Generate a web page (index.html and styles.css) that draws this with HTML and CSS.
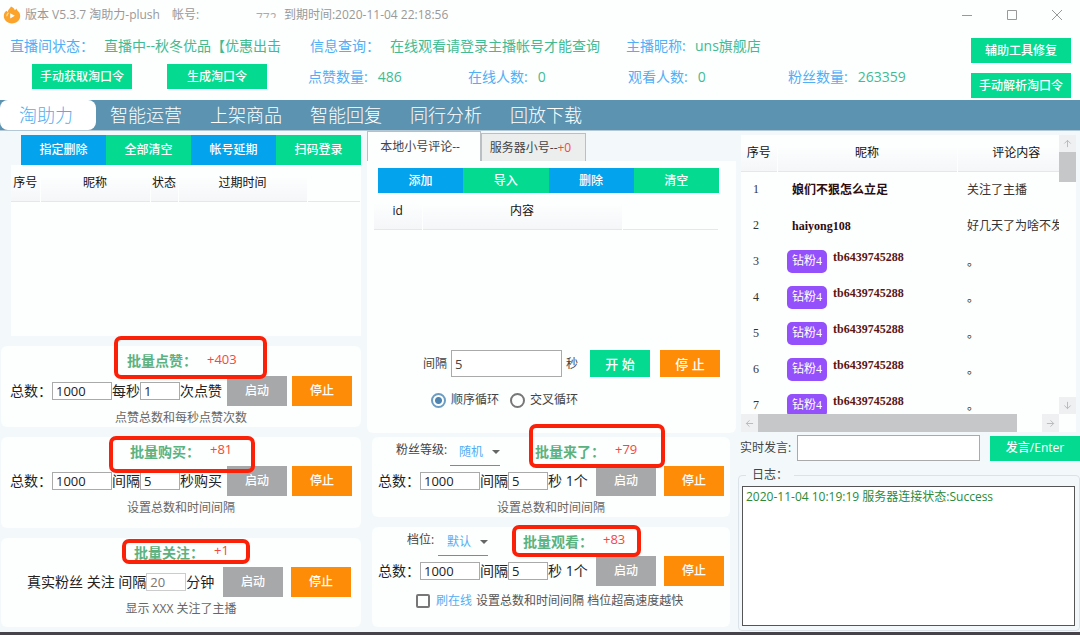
FILE: index.html
```html
<!DOCTYPE html>
<html lang="zh-CN">
<head>
<meta charset="utf-8">
<title>淘助力-plush</title>
<link rel="stylesheet" href="styles.css">
</head>
<body>
<div class="app">
  <header class="titlebar">
    <svg class="logo" viewBox="0 0 18 18" aria-hidden="true"><path d="M9 17.400C4.200 17.400.800 14 .800 10c0-2.600 1.200-4.200 2.600-5.300l1.300 1.200C5.200 3.800 6.800 2.600 8 .600c2 .900 3.300 2 3.900 3.700l1.600-1.900c.4 1.400.8 1.900 1.900 3.200 1.200 1.300 1.800 2.700 1.800 4.400 0 4.200-3.500 7.400-8.200 7.400z" fill="#fca32b"/><path d="M7.200 7.200v5.200l4.600-2.600z" fill="#fff"/><path d="M3.800 10.200a5.300 5.300 0 0 1 1.700-3.500" fill="none" stroke="#ffe0ad" stroke-width="1.200"/></svg>
    <span class="tb-name">版本 V5.3.7 淘助力-plush</span>
    <span class="tb-account">帐号:</span>
    <span class="tb-masked">772</span>
    <span class="tb-expire">到期时间:2020-11-04 22:18:56</span>
    <div class="winctl">
      <button aria-label="最小化"><svg viewBox="0 0 12 12"><path d="M1 6.500h10"/></svg></button>
      <button aria-label="最大化"><svg viewBox="0 0 12 12"><path d="M1.500 1.500h9v9h-9z"/></svg></button>
      <button aria-label="关闭"><svg viewBox="0 0 12 12"><path d="M1 1l10 10M11 1L1 11"/></svg></button>
    </div>
  </header>

  <section class="status">
    <div class="status-rows">
      <dl class="line line-a">
        <dt>直播间状态：</dt><dd>直播中--秋冬优品【优惠出击</dd>
        <dt>信息查询：</dt><dd>在线观看请登录主播帐号才能查询</dd>
        <dt>主播昵称:</dt><dd>uns旗舰店</dd>
      </dl>
      <div class="line line-b">
        <div class="token-btns"><button class="btn green wide">手动获取淘口令</button><button class="btn green wide">生成淘口令</button></div>
        <dl class="stats">
          <div><dt>点赞数量:</dt><dd>486</dd></div>
          <div><dt>在线人数:</dt><dd>0</dd></div>
          <div><dt>观看人数:</dt><dd>0</dd></div>
          <div><dt>粉丝数量:</dt><dd>263359</dd></div>
        </dl>
      </div>
    </div>
    <div class="tools"><button class="btn green wide">辅助工具修复</button><button class="btn green wide">手动解析淘口令</button></div>
  </section>

  <nav class="nav">
    <a href="#" class="active">淘助力</a><a href="#">智能运营</a><a href="#">上架商品</a><a href="#">智能回复</a><a href="#">同行分析</a><a href="#">回放下载</a>
  </nav>

  <main class="main">
    <div class="col-left">
      <div class="bar bar-accounts">
        <button class="btn blue">指定删除</button><button class="btn green">全部清空</button><button class="btn blue">帐号延期</button><button class="btn green">扫码登录</button>
      </div>
      <div class="list list-accounts">
        <table>
          <colgroup><col class="c29"><col class="c110"><col class="c28"><col class="c129"><col></colgroup>
          <thead><tr><th>序号</th><th>昵称</th><th>状态</th><th>过期时间</th><th class="blank"></th></tr></thead>
        </table>
      </div>

      <section class="card likes">
        <h2 class="title t1"><span>批量点赞：</span><em>+403</em></h2>
        <i class="mark m1"></i>
        <div class="ctl">
          <label for="n1">总数：</label><input id="n1" class="n" value="1000"><label for="s1">每秒</label><input id="s1" class="s" value="1"><span>次点赞</span>
          <button class="btn gray">启动</button><button class="btn orange">停止</button>
        </div>
        <p class="hint">点赞总数和每秒点赞次数</p>
      </section>

      <section class="card buy">
        <h2 class="title t2"><span>批量购买：</span><em>+81</em></h2>
        <i class="mark m2"></i>
        <div class="ctl">
          <label for="n2">总数：</label><input id="n2" class="n" value="1000"><label for="s2">间隔</label><input id="s2" class="s" value="5"><span>秒购买</span>
          <button class="btn gray">启动</button><button class="btn orange">停止</button>
        </div>
        <p class="hint">设置总数和时间间隔</p>
      </section>

      <section class="card fans">
        <h2 class="title t3"><span>批量关注：</span><em>+1</em></h2>
        <i class="mark m3"></i>
        <div class="ctl follow">
          <label for="s3">真实粉丝 关注 间隔</label><input id="s3" class="s dim" value="20"><span>分钟</span>
          <button class="btn gray">启动</button><button class="btn orange">停止</button>
        </div>
        <p class="hint">显示 XXX 关注了主播</p>
      </section>
    </div>

    <div class="col-mid">
      <div class="tabs"><button class="tab on">本地小号评论--</button><button class="tab">服务器小号--<b>+0</b></button></div>
      <div class="comments">
        <div class="bar">
          <button class="btn blue">添加</button><button class="btn green">导入</button><button class="btn blue">删除</button><button class="btn green">清空</button>
        </div>
        <div class="list list-comments">
          <table>
            <colgroup><col class="c48"><col class="c200"><col></colgroup>
            <thead><tr><th>id</th><th>内容</th><th class="blank"></th></tr></thead>
          </table>
        </div>
        <div class="interval">
          <label for="iv">间隔</label><input id="iv" value="5"><span>秒</span>
          <button class="btn green">开 始</button><button class="btn orange">停 止</button>
        </div>
        <div class="modes">
          <label><input type="radio" name="mode" checked>顺序循环</label>
          <label><input type="radio" name="mode">交叉循环</label>
        </div>
      </div>

      <section class="card enter">
        <div class="head">
          <label for="lv">粉丝等级:</label><span class="pick"><select id="lv"><option>随机</option></select></span>
          <h2 class="title"><span>批量来了：</span><em>+79</em></h2>
        </div>
        <i class="mark m4"></i>
        <div class="ctl">
          <label for="n4">总数：</label><input id="n4" class="n" value="1000"><label for="s4">间隔</label><input id="s4" class="s" value="5"><span>秒 1个</span>
          <button class="btn gray">启动</button><button class="btn orange">停止</button>
        </div>
        <p class="hint">设置总数和时间间隔</p>
      </section>

      <section class="card watch">
        <div class="head head-gear">
          <label for="gear">档位:</label><span class="pick"><select id="gear"><option>默认</option></select></span>
          <h2 class="title"><span>批量观看：</span><em>+83</em></h2>
        </div>
        <i class="mark m5"></i>
        <div class="ctl">
          <label for="n5">总数：</label><input id="n5" class="n" value="1000"><label for="s5">间隔</label><input id="s5" class="s" value="5"><span>秒 1个</span>
          <button class="btn gray">启动</button><button class="btn orange">停止</button>
        </div>
        <div class="online"><label><input type="checkbox">刷在线</label><span>设置总数和时间间隔 档位超高速度越快</span></div>
      </section>
    </div>

    <div class="col-right">
      <div class="chat">
        <div class="chat-view">
          <table>
            <colgroup><col class="c36"><col class="c180"><col></colgroup>
            <thead><tr><th>序号</th><th>昵称</th><th>评论内容</th></tr></thead>
            <tbody>
              <tr><td>1</td><td><div class="user plain"><b>娘们不狠怎么立足</b></div></td><td>关注了主播</td></tr>
              <tr><td>2</td><td><div class="user plain"><b>haiyong108</b></div></td><td>好几天了为啥不发</td></tr>
              <tr><td>3</td><td><div class="user"><span class="badge">钻粉4</span><b>tb6439745288</b></div></td><td>。</td></tr>
              <tr><td>4</td><td><div class="user"><span class="badge">钻粉4</span><b>tb6439745288</b></div></td><td>。</td></tr>
              <tr><td>5</td><td><div class="user"><span class="badge">钻粉4</span><b>tb6439745288</b></div></td><td>。</td></tr>
              <tr><td>6</td><td><div class="user"><span class="badge">钻粉4</span><b>tb6439745288</b></div></td><td>。</td></tr>
              <tr><td>7</td><td><div class="user"><span class="badge">钻粉4</span><b>tb6439745288</b></div></td><td>。</td></tr>
            </tbody>
          </table>
        </div>
        <div class="vbar">
          <button aria-label="向上"><svg viewBox="0 0 10 10"><path d="M5 9V1.500M1.500 5L5 1.500 8.500 5"/></svg></button>
          <i></i>
          <button aria-label="向下"><svg viewBox="0 0 10 10"><path d="M5 1v7.500M1.500 5L5 8.500 8.500 5"/></svg></button>
        </div>
        <div class="hbar">
          <button aria-label="向左"><svg viewBox="0 0 10 10"><path d="M9 5H1.500M5 1.500L1.500 5 5 8.500"/></svg></button>
          <i></i>
          <button aria-label="向右"><svg viewBox="0 0 10 10"><path d="M1 5h7.500M5 1.500L8.500 5 5 8.500"/></svg></button>
        </div>
      </div>
      <div class="send"><label for="say">实时发言:</label><input id="say"><button class="btn green">发言/Enter</button></div>
      <fieldset class="log">
        <legend>日志：</legend>
        <div class="log-box" tabindex="0">2020-11-04 10:19:19 服务器连接状态:Success</div>
      </fieldset>
    </div>
  </main>
  <div class="desktop"></div>
</div>
</body>
</html>
```
FILE: styles.css
```css
* { box-sizing: border-box; }
body {
  margin: 0;
  background: #fdfefe;
  color: #222;
  font: 12px/18px "Open Sans", "Noto Sans CJK SC", sans-serif;
}
button, input, select { font: inherit; color: inherit; margin: 0; padding: 0; border: 0; border-radius: 0; }
h2, p, dl, dd, dt, fieldset { margin: 0; padding: 0; border: 0; }
em, i { font-style: normal; }
.app { min-height: 100vh; display: flex; flex-direction: column; overflow: hidden; }

/* title bar */
.titlebar { display: flex; align-items: center; height: 30px; padding-left: 3px; color: #999; white-space: nowrap; }
.logo { width: 18px; height: 18px; margin-right: 4px; }
.tb-account { margin-left: 12px; width: 84px; }
.tb-masked { height: 6px; line-height: 12px; width: 28px; overflow: hidden; color: #aaa; }
.winctl { display: flex; margin-left: auto; padding-right: 17px; gap: 33px; }
.winctl button { width: 12px; height: 12px; background: none; display: flex; }
.winctl svg { width: 12px; height: 12px; fill: none; stroke: #999; stroke-width: 1; }

/* status */
.status { display: flex; justify-content: space-between; height: 70px; font-size: 14px; line-height: 20px; white-space: nowrap; }
.status dt { color: #52aef5; }
.status dd { color: #42bb93; }
.status-rows { flex: 1; padding: 6px 0 0 10px; }
.line-a { display: grid; grid-template-columns: 94px 206px 80px 236px 69px 1fr; }
.line-b { display: flex; align-items: center; margin-top: 8px; }
.token-btns { display: flex; gap: 35px; padding-left: 22px; width: 298px; }
.stats { display: flex; }
.stats div { display: flex; width: 160px; gap: 10px; }
.tools { display: flex; flex-direction: column; gap: 10px; padding: 8px 9px 0 0; }

.btn { display: block; color: #fff; font-size: 12px; line-height: 16px; font-weight: 500; text-align: center; white-space: nowrap; width: 60px; height: 30px; }
.btn.wide { width: 100px; height: 25px; }
.green { background: #04da90; }
.blue { background: #03a3ee; }
.gray { background: #a6a8aa; }
.orange { background: #ff8c06; }

/* navigation */
.nav { display: flex; height: 31px; background: #5b93b1; border-bottom: 1px solid #b3c8d4; }
.nav a { width: 100px; padding-left: 10px; color: #fff; font-size: 18px; line-height: 31px; font-weight: 300; text-decoration: none; white-space: nowrap; }
.nav a.active { width: 96px; margin-right: 4px; padding-left: 19px; background: #fff; color: #52aef0; border-radius: 8px; }

/* columns */
.main { flex: 1; display: grid; grid-template-columns: 366fr 370fr 344fr; background: #f3f9fb; }
.col-left, .col-mid, .col-right { display: flex; flex-direction: column; min-width: 0; }
.col-left { padding: 4px 5px 5px 1px; gap: 10px; }
.bar { display: flex; }
.bar .btn { flex: 1; height: 25px; }
.bar-accounts { padding-left: 20px; margin-bottom: -10px; }
.bar-accounts .btn { height: 30px; }
.list { flex: 1; background: #fdfefe; }
.list table, .chat table { border-collapse: collapse; table-layout: fixed; width: 100%; }
.list thead tr, .chat thead tr { border-bottom: 1px solid #e4e8ea; }
th { height: 36px; padding: 0; font-weight: 400; color: #111; background: linear-gradient(#fdfefe 30%, #f4f6f8); border-right: 1px solid #fdfefe; white-space: nowrap; }
th.blank { background: none; }
.list-accounts { margin-left: 10px; }
.c28 { width: 28px; } .c29 { width: 29px; } .c36 { width: 36px; } .c48 { width: 48px; }
.c110 { width: 110px; } .c129 { width: 129px; } .c180 { width: 180px; } .c200 { width: 200px; }

/* cards */
.card { position: relative; background: #fdfefe; border-radius: 6px; }
.title { display: flex; align-items: center; height: 29px; font-size: 14px; line-height: 20px; color: #5bb27e; font-weight: 700; white-space: nowrap; }
.title span { width: 80px; }
.title em { color: #f5483c; font-size: 13px; font-weight: 400; line-height: 20px; padding-bottom: 5px; }
.t1 { height: 30px; padding-left: 126px; }
.t2 { padding-left: 129px; }
.t3 { padding-left: 133px; }
.ctl { display: flex; align-items: center; font-size: 14px; height: 30px; padding: 0 9px; white-space: nowrap; }
.ctl label:first-child { width: 42px; }
.ctl input { height: 18px; border: 1px solid #aaa; background: #fff; font-size: 13px; padding-left: 3px; }
.ctl .n { width: 60px; }
.ctl .s { width: 40px; }
.ctl .dim { color: #777; border-color: #ccc; }
.ctl .gray { margin-left: auto; }
.ctl .orange { margin-left: 5px; }
.follow { padding: 0 10px 0 26px; }
.ctl.follow label:first-child { width: auto; }
.follow .orange { margin-left: 8px; }
.hint { text-align: center; color: #666; line-height: 24px; height: 21px; }
.buy { padding-bottom: 11px; }
.fans { padding-bottom: 9px; }
.mark { position: absolute; border: 4px solid #fb2109; border-radius: 7px; pointer-events: none; }
.m1 { left: 113px; top: -10px; width: 153px; height: 43px; }
.m2 { left: 108px; top: -1px; width: 146px; height: 37px; }
.m3 { left: 121px; top: 1px; width: 128px; height: 25px; }
.m4 { left: 157px; top: -13px; width: 136px; height: 44px; }
.m5 { left: 140px; top: -2px; width: 129px; height: 32px; }

/* middle column */
.col-mid { padding: 0 0 5px 1px; }
.tabs { display: flex; align-items: flex-end; height: 30px; }
.tab { height: 28px; width: 105px; padding-right: 6px; background: #eceded; color: #444; border: 1px solid #b9bfc3; border-bottom: 0; white-space: nowrap; }
.tab.on { height: 30px; width: 114px; padding-right: 8px; background: #fdfefe; }
.tab b { color: #f5483c; font-weight: 400; }
.comments { flex: 1; display: flex; flex-direction: column; background: #fdfefe; padding: 7px 16px 24px 7px; border-radius: 0 0 6px 6px; }
.comments .bar { padding-left: 4px; margin-right: 1px; }
.list-comments { margin-right: 1px; }
.interval { display: flex; align-items: center; justify-content: flex-end; color: #444; }
.interval input { width: 111px; height: 27px; margin: 0 4px; padding-left: 3px; border: 1px solid #aaa; background: #fff; font-size: 13px; }
.interval .btn { height: 27px; margin-left: 12px; font-size: 13px; }
.interval .orange { margin-left: 10px; }
.modes { display: flex; gap: 11px; margin-top: 14px; padding-left: 57px; color: #444; }
.modes label { display: flex; align-items: center; gap: 5px; }
.modes input { appearance: none; width: 15px; height: 15px; border: 2px solid #777; border-radius: 50%; }
.modes input:checked { border-color: #6b9cc4; background: radial-gradient(circle, #4f83b0 0 3px, #fdfefe 4px); }
.enter, .watch { margin: 4px 6px 0 5px; }
.watch { margin-top: 10px; padding-bottom: 11px; }
.head { display: flex; align-items: flex-start; padding-left: 24px; color: #444; }
.head label { line-height: 26px; width: 54px; }
.pick { position: relative; width: 50px; height: 29px; border-bottom: 1px solid #888; margin-right: 35px; }
.pick select { appearance: none; width: 100%; height: 28px; padding: 2px 0 0 9px; background: none; color: #52aef5; }
.pick::after { content: ""; position: absolute; right: 0; top: 13px; border: 4px solid transparent; border-top-color: #666; pointer-events: none; }
.head-gear { padding-left: 35px; }
.head-gear label { width: 31px; }
.enter .ctl, .watch .ctl { padding: 0 6px; }
.col-mid .ctl .orange { margin-left: 8px; }
.online { display: flex; align-items: center; gap: 4px; height: 30px; padding-left: 44px; color: #555; white-space: nowrap; }
.online label { display: flex; align-items: center; gap: 6px; color: #52aef5; }
.online input { appearance: none; width: 14px; height: 14px; border: 2px solid #777; border-radius: 2px; }

/* right column */
.col-right { padding: 4px 0 1px 2px; }
.chat { display: grid; grid-template: 279px 18px / 1fr 17px; margin: 0 4px 0 3px; background: #fdfefe; }
.chat-view { overflow: hidden; }
.chat .chat-view table { width: calc(100% + 17px); }
.chat td { height: 36px; padding: 1px 0 0 10px; color: #333; white-space: nowrap; }
.chat td:first-child { padding: 0 6px 0 0; text-align: center; font: 12px/18px "Liberation Serif", serif; }
.user { display: flex; align-items: flex-start; gap: 6px; font: 12px/14px "Liberation Serif", "Noto Sans CJK SC", serif; color: #5c1414; }
.user.plain { padding-left: 5px; color: #2c0c0c; }
.badge { width: 40px; height: 23px; border-radius: 5px; background: #9350fb; color: #fff; line-height: 23px; text-align: center; }
.vbar, .hbar { display: flex; }
.vbar { flex-direction: column; }
.vbar i { height: 30px; margin-bottom: auto; background: #c6c7c9; }
.hbar i { width: 259px; margin-right: auto; background: #c6c7c9; }
.vbar button, .hbar button { display: flex; align-items: center; justify-content: center; width: 17px; height: 17px; background: #eff0f1; }
.hbar button { height: 18px; }
.chat svg { width: 9px; height: 9px; fill: none; stroke: #b3b5b7; stroke-width: 1; }
.send { display: flex; align-items: center; margin-top: 3px; padding-left: 2px; color: #444; white-space: nowrap; }
.send label { width: 57px; }
.send input { flex: 1; min-width: 0; height: 26px; border: 1px solid #aaa; background: #fff; padding: 0 4px; }
.send .btn { width: 90px; height: 25px; margin-left: 10px; }
.log { flex: 1; display: flex; min-width: 0; margin-top: 5px; padding: 2px 4px 4px 3px; border: 1px solid #dbe3e8; border-radius: 4px; }
.log legend { margin-left: 4px; padding: 0 6px; color: #444; line-height: 18px; }
.log-box { flex: 1; border: 1px solid #555; background: #fff; color: #2a8a3a; padding: 1px 3px; }
.desktop { height: 3px; background: #46444a; }
```
